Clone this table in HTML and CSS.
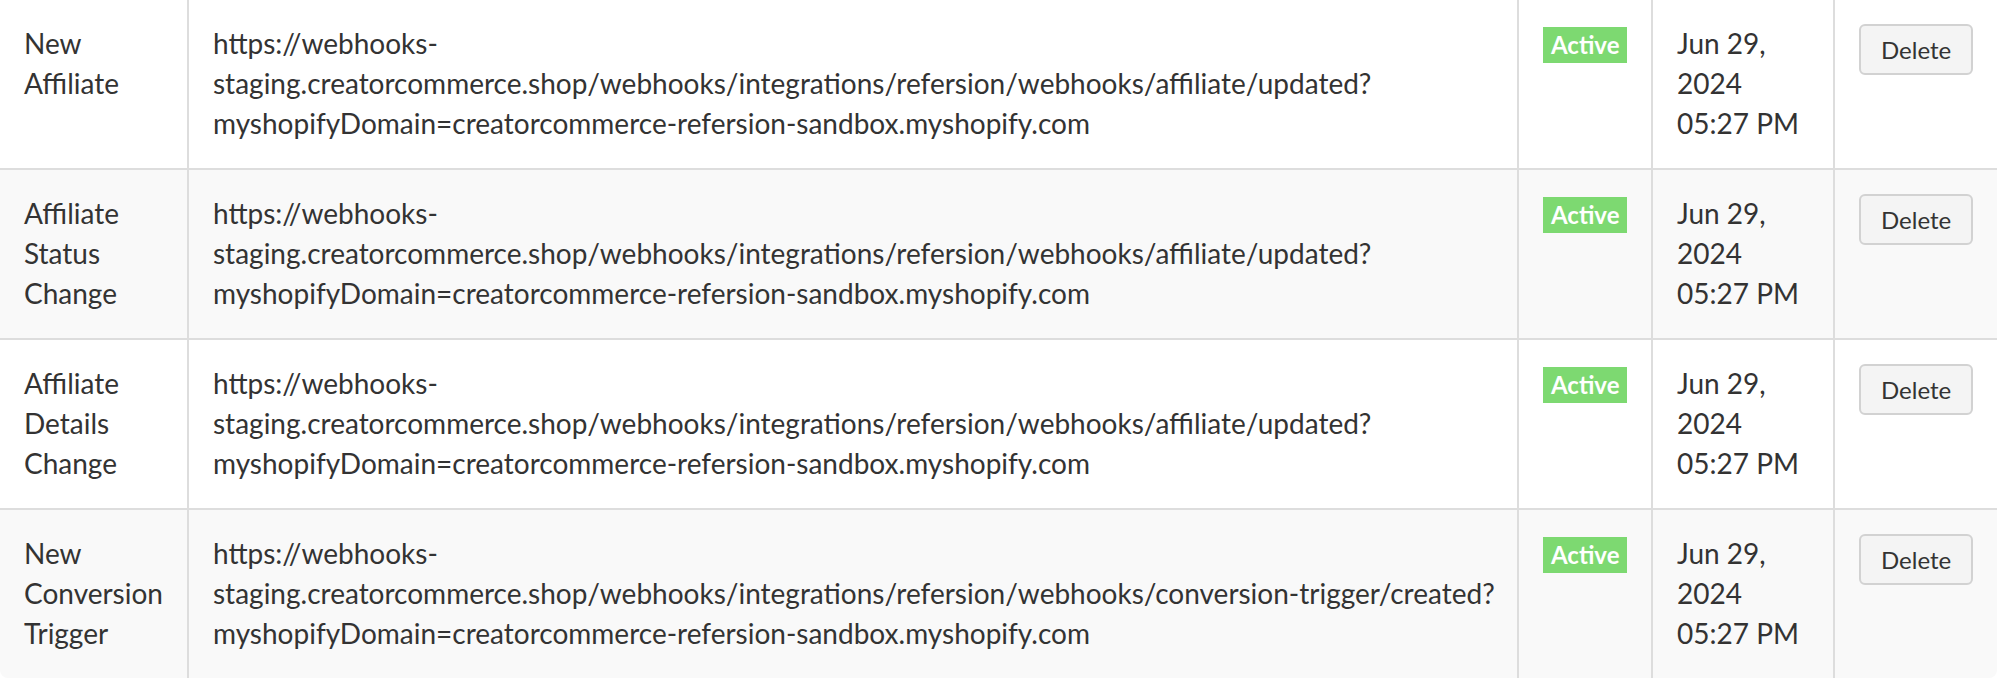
FILE: index.html
```html
<!DOCTYPE html>
<html lang="en">
<head>
<meta charset="utf-8">
<title>Webhooks</title>
<link rel="stylesheet" href="styles.css">
</head>
<body>
<div class="table-wrap">
  <table class="hooks">
    <colgroup>
      <col class="c-event">
      <col class="c-url">
      <col class="c-status">
      <col class="c-date">
      <col class="c-action">
    </colgroup>
    <tbody>
      <tr>
        <td class="event">New Affiliate</td>
        <td class="url">https://webhooks-staging.creatorcommerce.shop/webhooks/integrations/refersion/webhooks/affiliate/updated?myshopifyDomain=creatorcommerce-refersion-sandbox.myshopify.com</td>
        <td class="status"><span class="badge">Active</span></td>
        <td class="date">Jun 29, 2024 05:27 PM</td>
        <td class="action"><button class="btn" type="button">Delete</button></td>
      </tr>
      <tr>
        <td class="event">Affiliate Status Change</td>
        <td class="url">https://webhooks-staging.creatorcommerce.shop/webhooks/integrations/refersion/webhooks/affiliate/updated?myshopifyDomain=creatorcommerce-refersion-sandbox.myshopify.com</td>
        <td class="status"><span class="badge">Active</span></td>
        <td class="date">Jun 29, 2024 05:27 PM</td>
        <td class="action"><button class="btn" type="button">Delete</button></td>
      </tr>
      <tr>
        <td class="event">Affiliate Details Change</td>
        <td class="url">https://webhooks-staging.creatorcommerce.shop/webhooks/integrations/refersion/webhooks/affiliate/updated?myshopifyDomain=creatorcommerce-refersion-sandbox.myshopify.com</td>
        <td class="status"><span class="badge">Active</span></td>
        <td class="date">Jun 29, 2024 05:27 PM</td>
        <td class="action"><button class="btn" type="button">Delete</button></td>
      </tr>
      <tr>
        <td class="event">New Conversion Trigger</td>
        <td class="url">https://webhooks-staging.creatorcommerce.shop/webhooks/integrations/refersion/webhooks/conversion-trigger/created?myshopifyDomain=creatorcommerce-refersion-sandbox.myshopify.com</td>
        <td class="status"><span class="badge">Active</span></td>
        <td class="date">Jun 29, 2024 05:27 PM</td>
        <td class="action"><button class="btn" type="button">Delete</button></td>
      </tr>
    </tbody>
  </table>
</div>
</body>
</html>
```

FILE: styles.css
```css
html, body {
  margin: 0;
  padding: 0;
  background: #ffffff;
}

body {
  font-family: Lato, "Open Sans", sans-serif;
  color: #333333;
}

.table-wrap {
  width: 1997px;
  border-radius: 0 0 8px 8px;
  overflow: hidden;
}

.hooks {
  width: 100%;
  table-layout: fixed;
  border-collapse: separate;
  border-spacing: 0;
  font-size: 28px;
  line-height: 40px;
}

.c-event { width: 189px; }
.c-url { width: 1330px; }
.c-status { width: 134px; }
.c-date { width: 182px; }
.c-action { width: 162px; }

.hooks td {
  vertical-align: top;
  padding: 23px 24px 25px;
  border-right: 2px solid #dddddd;
  border-bottom: 2px solid #dddddd;
  height: 120px;
}

.hooks td:last-child {
  border-right: none;
}

.hooks tr:last-child td {
  border-bottom: none;
}

.hooks tr:nth-child(even) td {
  background: #f9f9f9;
}

.hooks td.url {
  padding-right: 8px;
}

.hooks td.action {
  padding-top: 24px;
  padding-bottom: 24px;
}

.badge {
  display: inline-block;
  background: #7dd971;
  color: #ffffff;
  font-weight: 700;
  font-size: 24px;
  line-height: 28px;
  padding: 4px 8px;
}

.btn {
  font-family: Lato, "Open Sans", sans-serif;
  font-size: 24px;
  color: #333333;
  background: #f4f4f4;
  border: 2px solid #d2d2d2;
  border-radius: 6px;
  height: 51px;
  padding: 0 20px;
  line-height: 47px;
  margin: 0;
  cursor: pointer;
}
```
